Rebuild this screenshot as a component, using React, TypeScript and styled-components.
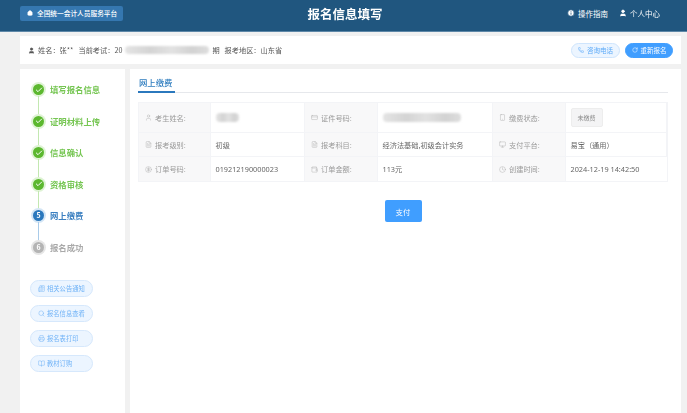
import React from 'react';
import styled, { createGlobalStyle } from 'styled-components';
import {
  BookOpen,
  Check,
  CircleDollarSign,
  Clock,
  CreditCard,
  FileText,
  Info,
  Monitor,
  Newspaper,
  Phone,
  Printer,
  RotateCw,
  Search,
  Smartphone,
  User,
  Wallet,
  Home,
} from 'lucide-react';

const GlobalStyle = createGlobalStyle`
  html, body {
    margin: 0;
    padding: 0;
    height: 100%;
    overflow: hidden;
    background: #f1f1f1;
    font-family: "Noto Sans CJK SC", "Noto Sans", sans-serif;
  }
  #root {
    height: 100%;
  }
`;

const Page = styled.div`
  width: 687px;
  height: 413px;
  display: flex;
  flex-direction: column;
  filter: blur(0.35px);
`;

const Header = styled.header`
  height: 32px;
  flex: none;
  box-sizing: border-box;
  padding: 0 27px 0 20px;
  display: grid;
  grid-template-columns: 1fr auto 1fr;
  align-items: center;
  background: #20567f;
  border-bottom: 1px solid #5e88a8;
  color: #fff;
`;

const PlatformTag = styled.div`
  justify-self: start;
  width: 103px;
  height: 15px;
  display: flex;
  align-items: center;
  gap: 4px;
  padding-left: 7px;
  box-sizing: border-box;
  margin-top: -5px;
  border-radius: 2px;
  background: #3577b0;
  font-size: 6.7px;
  font-weight: 500;
  white-space: nowrap;
`;

const Title = styled.h1`
  margin: -4px 0 0;
  font-size: 12.5px;
  font-weight: 700;
  letter-spacing: 0;
  transform: translateX(5px);
`;

const HeaderLinks = styled.div`
  justify-self: end;
  display: flex;
  gap: 11px;
  margin-top: -5px;
`;

const HeaderLink = styled.span`
  display: flex;
  align-items: center;
  gap: 3px;
  font-size: 7.5px;
  white-space: nowrap;
`;

const Content = styled.div`
  flex: 1;
  min-height: 0;
  display: flex;
  flex-direction: column;
  gap: 5px;
  padding: 4px 6px 0 20px;
`;

const InfoBar = styled.section`
  height: 28px;
  flex: none;
  display: flex;
  align-items: center;
  justify-content: space-between;
  padding: 0 8px;
  background: #fff;
`;

const Candidate = styled.div`
  display: flex;
  align-items: center;
  font-size: 7.2px;
  color: #555;
  white-space: nowrap;
`;

const CandidateItem = styled.span`
  display: flex;
  align-items: center;
  gap: 3px;
  margin-right: 5px;
`;

const Smudge = styled.span<{ $w: number; $h?: number }>`
  display: inline-block;
  width: ${(p) => p.$w}px;
  height: ${(p) => p.$h ?? 8}px;
  border-radius: 4px;
  background: linear-gradient(90deg, #e4e4e4, #d4d4d4 30%, #e2e2e2 55%, #d2d2d2 80%, #dedede);
  filter: blur(1.2px);
`;

const BarActions = styled.div`
  display: flex;
  gap: 5px;
`;

const PillButton = styled.button<{ $solid?: boolean }>`
  height: 15px;
  width: ${(p) => (p.$solid ? 48 : 49)}px;
  padding: 0;
  display: flex;
  align-items: center;
  justify-content: center;
  gap: 3px;
  border-radius: 8px;
  border: 1px solid ${(p) => (p.$solid ? '#409eff' : '#cfe5fd')};
  background: ${(p) => (p.$solid ? '#409eff' : '#ecf5ff')};
  color: ${(p) => (p.$solid ? '#fff' : '#5aa9f8')};
  font: inherit;
  font-size: 6.5px;
  white-space: nowrap;
`;

const Body = styled.div`
  flex: 1;
  min-height: 0;
  display: flex;
  gap: 5px;
`;

const Sidebar = styled.aside`
  width: 105px;
  flex: none;
  box-sizing: border-box;
  padding: 13px 10px 0 11px;
  background: #fff;
`;

const Steps = styled.ol`
  list-style: none;
  margin: 0 0 8px;
  padding: 0;
`;

const StepRow = styled.li<{ $color: string; $line?: string }>`
  position: relative;
  height: 31.6px;
  display: flex;
  align-items: flex-start;
  gap: 4px;
  color: ${(p) => p.$color};
  font-size: 8.4px;
  font-weight: 700;
  &::after {
    content: '';
    display: ${(p) => (p.$line ? 'block' : 'none')};
    position: absolute;
    left: 7px;
    top: 14px;
    width: 1px;
    height: 20px;
    background: ${(p) => p.$line};
  }
`;

const StepDot = styled.span<{ $fill: string; $halo: string }>`
  width: 11px;
  height: 11px;
  margin: 2px;
  flex: none;
  display: flex;
  align-items: center;
  justify-content: center;
  border-radius: 50%;
  background: ${(p) => p.$fill};
  box-shadow: 0 0 0 2px ${(p) => p.$halo};
  color: #fff;
  font-size: 7px;
  font-weight: 700;
  line-height: 1;
`;

const StepLabel = styled.span`
  line-height: 15px;
`;

const QuickLinks = styled.div`
  display: flex;
  flex-direction: column;
  gap: 8.3px;
  margin-left: -1px;
`;

const QuickLink = styled.button`
  width: 63px;
  height: 17px;
  padding: 0 0 0 7px;
  box-sizing: border-box;
  display: flex;
  align-items: center;
  gap: 2px;
  border-radius: 9px;
  border: 1px solid #d6e8fc;
  background: #ecf5ff;
  color: #70b3f7;
  font: inherit;
  font-size: 6.3px;
  white-space: nowrap;
`;

const Main = styled.main`
  flex: 1;
  min-width: 0;
  box-sizing: border-box;
  padding: 6px 13px 0 8px;
  background: #fff;
`;

const TabStrip = styled.div`
  height: 17px;
  border-bottom: 1px solid #e6e8ec;
`;

const ActiveTab = styled.div`
  box-sizing: border-box;
  height: 18px;
  width: 37px;
  padding-left: 1px;
  border-bottom: 2px solid #2b78bd;
  color: #2f7dbf;
  font-size: 8.4px;
  font-weight: 500;
  line-height: 15px;
  white-space: nowrap;
`;

const DetailGrid = styled.div`
  margin-top: 9px;
  display: grid;
  grid-template-columns: 72px 94px 73px 115px 73px 1fr;
  grid-template-rows: 30px 24px 25px;
  border: 1px solid #f3f4f7;
  border-width: 1px 1px 0 1px;
`;

const Key = styled.div`
  display: flex;
  align-items: center;
  gap: 3px;
  padding-left: 6px;
  background: #f8f8f9;
  border-bottom: 1px solid #f3f4f7;
  border-right: 1px solid #f3f4f7;
  color: #9a9a9a;
  font-size: 7.2px;
  white-space: nowrap;
`;

const Val = styled.div`
  display: flex;
  align-items: center;
  padding-left: 4.5px;
  border-bottom: 1px solid #f3f4f7;
  border-right: 1px solid #f3f4f7;
  color: #666;
  font-size: 7.2px;
  white-space: nowrap;
  &:last-child {
    border-right: 0;
  }
`;

const Digits = styled.span`
  font-family: "Noto Sans", "Open Sans", sans-serif;
  font-size: 7.3px;
`;

const StatusChip = styled.span`
  width: 30px;
  height: 17px;
  display: flex;
  align-items: center;
  justify-content: center;
  border: 1px solid #ededed;
  border-radius: 2px;
  background: #f4f4f5;
  color: #8a8a8a;
  font-size: 6px;
`;

const PayRow = styled.div`
  display: flex;
  justify-content: center;
  margin-top: 18px;
`;

const PayButton = styled.button`
  width: 37px;
  height: 22px;
  padding: 0;
  border: 0;
  border-radius: 2px;
  background: #409eff;
  color: #fff;
  font: inherit;
  font-size: 7.4px;
`;

const GREEN = { fill: '#5cb82f', halo: '#dff3d5', text: '#76c653', line: '#c3e8b1' };

const steps = ['填写报名信息', '证明材料上传', '信息确认', '资格审核'];

const quickLinks = [
  { label: '相关公告通知', icon: Newspaper },
  { label: '报名信息查看', icon: Search },
  { label: '报名表打印', icon: Printer },
  { label: '教材订购', icon: BookOpen },
];

const KeyIcon = { size: 7, strokeWidth: 1.4, color: '#a8a8a8' };

export default function App() {
  return (
    <Page>
      <GlobalStyle />
      <Header>
        <PlatformTag>
          <Home size={6} fill="#fff" strokeWidth={1.5} />
          全国统一会计人员服务平台
        </PlatformTag>
        <Title>报名信息填写</Title>
        <HeaderLinks>
          <HeaderLink>
            <Info size={8} fill="#fff" color="#20567f" strokeWidth={2.4} />
            操作指南
          </HeaderLink>
          <HeaderLink>
            <User size={8} fill="#fff" strokeWidth={2} />
            个人中心
          </HeaderLink>
        </HeaderLinks>
      </Header>
      <Content>
        <InfoBar>
          <Candidate>
            <CandidateItem>
              <User size={7} fill="#555" strokeWidth={2} />
              姓名：张**
            </CandidateItem>
            <CandidateItem>
              当前考试：20
              <Smudge $w={84} />
              期
            </CandidateItem>
            <CandidateItem>报考地区：山东省</CandidateItem>
          </Candidate>
          <BarActions>
            <PillButton>
              <Phone size={6} strokeWidth={2} />
              咨询电话
            </PillButton>
            <PillButton $solid>
              <RotateCw size={6} strokeWidth={2} />
              重新报名
            </PillButton>
          </BarActions>
        </InfoBar>
        <Body>
          <Sidebar>
            <Steps>
              {steps.map((label) => (
                <StepRow key={label} $color={GREEN.text} $line={GREEN.line}>
                  <StepDot $fill={GREEN.fill} $halo={GREEN.halo}>
                    <Check size={8} strokeWidth={3} />
                  </StepDot>
                  <StepLabel>{label}</StepLabel>
                </StepRow>
              ))}
              <StepRow $color="#3a7fc0" $line="#a9cbe9">
                <StepDot $fill="#2b78bd" $halo="#d5e6f5">5</StepDot>
                <StepLabel>网上缴费</StepLabel>
              </StepRow>
              <StepRow $color="#a9a9a9">
                <StepDot $fill="#b4b4b4" $halo="#e6e6e6">6</StepDot>
                <StepLabel>报名成功</StepLabel>
              </StepRow>
            </Steps>
            <QuickLinks>
              {quickLinks.map(({ label, icon: Icon }) => (
                <QuickLink key={label}>
                  <Icon size={7} strokeWidth={1.6} />
                  {label}
                </QuickLink>
              ))}
            </QuickLinks>
          </Sidebar>
          <Main>
            <TabStrip>
              <ActiveTab>网上缴费</ActiveTab>
            </TabStrip>
            <DetailGrid>
              <Key><User {...KeyIcon} />考生姓名:</Key>
              <Val><Smudge $w={23} $h={9} /></Val>
              <Key><CreditCard {...KeyIcon} />证件号码:</Key>
              <Val><Smudge $w={78} $h={9} /></Val>
              <Key><Smartphone {...KeyIcon} />缴费状态:</Key>
              <Val><StatusChip>未缴费</StatusChip></Val>

              <Key><FileText {...KeyIcon} />报考级别:</Key>
              <Val>初级</Val>
              <Key><FileText {...KeyIcon} />报考科目:</Key>
              <Val>经济法基础,初级会计实务</Val>
              <Key><Monitor {...KeyIcon} />支付平台:</Key>
              <Val>易宝（通用）</Val>

              <Key><CircleDollarSign {...KeyIcon} />订单号码:</Key>
              <Val><Digits>019212190000023</Digits></Val>
              <Key><Wallet {...KeyIcon} />订单金额:</Key>
              <Val><Digits>113</Digits>元</Val>
              <Key><Clock {...KeyIcon} />创建时间:</Key>
              <Val><Digits>2024-12-19 14:42:50</Digits></Val>
            </DetailGrid>
            <PayRow>
              <PayButton>支付</PayButton>
            </PayRow>
          </Main>
        </Body>
      </Content>
    </Page>
  );
}
